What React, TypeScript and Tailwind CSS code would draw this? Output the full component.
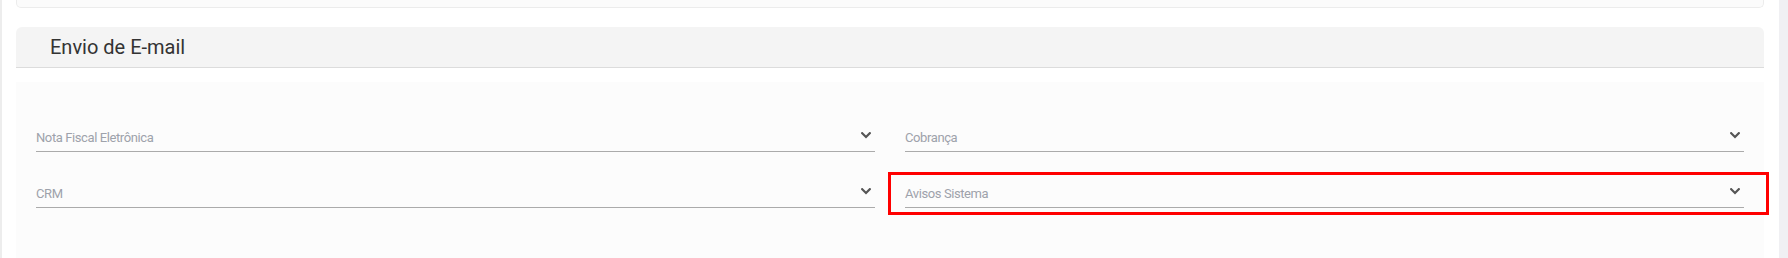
const fields = [
  { label: "Nota Fiscal Eletrônica" },
  { label: "Cobrança" },
  { label: "CRM" },
  { label: "Avisos Sistema", marked: true },
];

function Chevron() {
  return (
    <svg width="10" height="7" viewBox="0 0 10 7" className="mt-[11px] mr-[4px] shrink-0">
      <polyline
        points="1.2,1.2 5,5 8.8,1.2"
        fill="none"
        stroke="#555555"
        strokeWidth="2.2"
        strokeLinecap="square"
      />
    </svg>
  );
}

function SelectField({ label, marked }: { label: string; marked?: boolean }) {
  return (
    <div className="relative flex h-[31px] justify-between border-b border-[#ababab]">
      <span className="self-end pb-[5px] text-[13px] leading-[16px] tracking-[-0.4px] text-[#9ea2ab]">
        {label}
      </span>
      <Chevron />
      {marked && (
        <div className="pointer-events-none absolute -top-[5px] -bottom-[8px] -left-[17px] -right-[25px] border-[3px] border-[#ff0000]" />
      )}
    </div>
  );
}

export default function App() {
  return (
    <div
      className="flex h-[258px] w-[1788px] overflow-hidden bg-white"
      style={{ fontFamily: "Roboto, 'Liberation Sans', sans-serif" }}
    >
      <div className="w-[2px] shrink-0 bg-[#ededed]" />
      <div className="flex flex-1 flex-col pl-[14px] pr-[15px]">
        <div className="h-[8px] rounded-b-[5px] border-x border-b border-[#ececec] bg-[#fbfbfb]" />

        <div className="mt-[19px] flex h-[41px] items-center rounded-t-[6px] border-b border-[#dcdcdc] bg-[#f4f4f4] pl-[34px]">
          <h2 className="text-[20px] font-normal text-[#333333]">Envio de E-mail</h2>
        </div>

        <div className="mt-[14px] flex-1 bg-[#fcfcfc] px-[20px] pt-[39px]">
          <div className="grid grid-cols-2 gap-x-[30px] gap-y-[25px]">
            {fields.map((f) => (
              <SelectField key={f.label} label={f.label} marked={f.marked} />
            ))}
          </div>
        </div>
      </div>
      <div className="w-[9px] shrink-0 bg-[#f0f0f3]" />
    </div>
  );
}
